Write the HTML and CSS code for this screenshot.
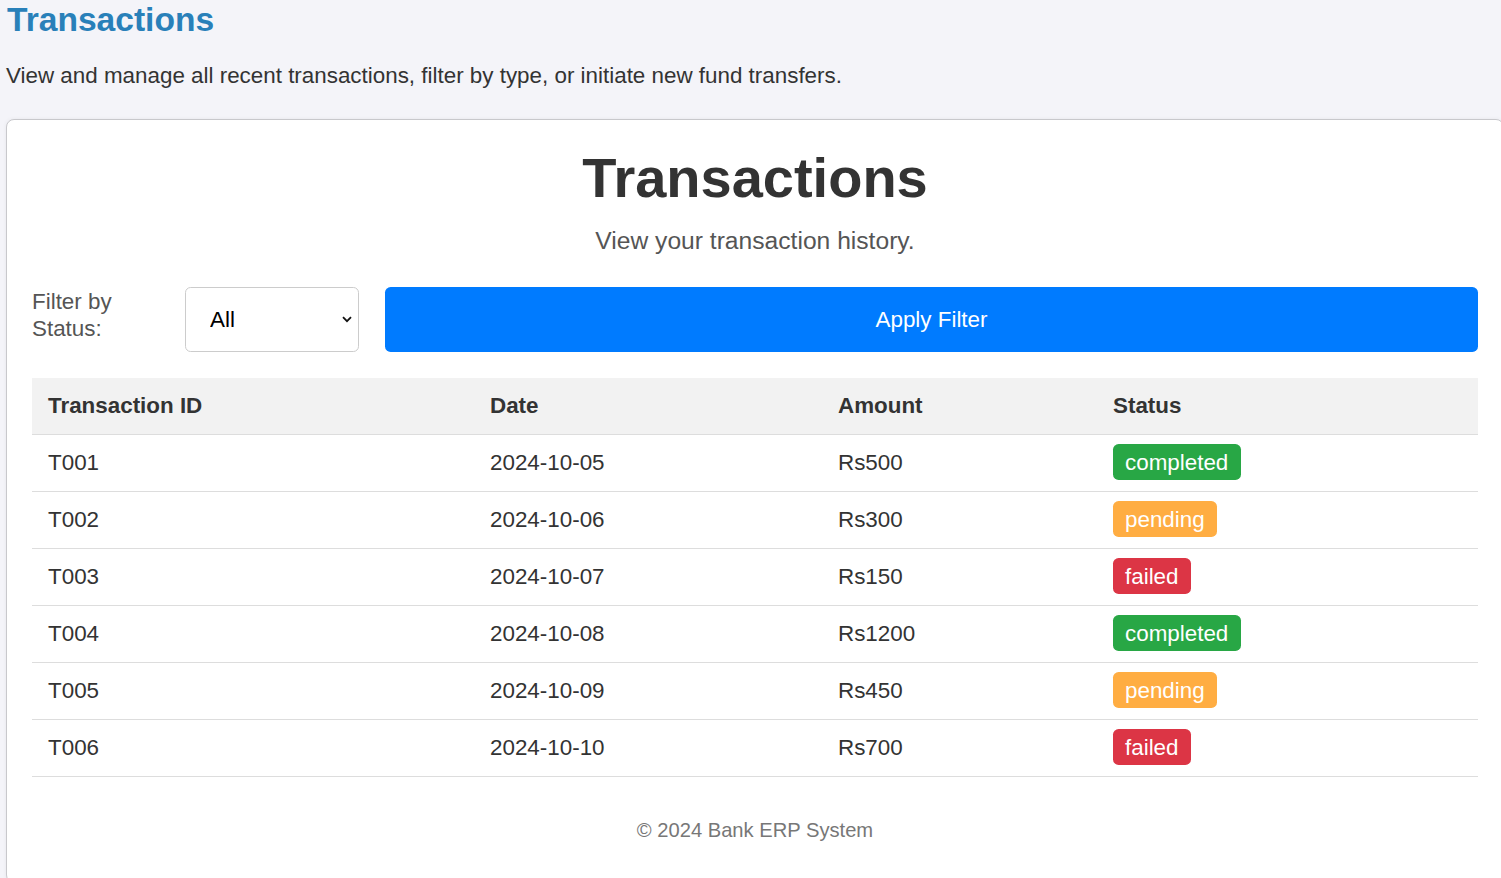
FILE: index.html
```html
<!DOCTYPE html>
<html lang="en">
<head>
<meta charset="utf-8">
<title>Transactions</title>
<link rel="stylesheet" href="styles.css">
</head>
<body>
<main class="page">
  <h2 class="page-title">Transactions</h2>
  <p class="page-desc">View and manage all recent transactions, filter by type, or initiate new fund transfers.</p>

  <section class="card">
    <h1 class="card-title">Transactions</h1>
    <p class="card-sub">View your transaction history.</p>

    <form class="filter">
      <label class="filter-label" for="status">Filter by Status:</label>
      <div class="select-wrap">
        <select id="status" class="select">
          <option>All</option>
          <option>completed</option>
          <option>pending</option>
          <option>failed</option>
        </select>
        <svg class="chevron" width="10" height="7" viewBox="0 0 10 7" aria-hidden="true"><path d="M1 1.2 L5 5.2 L9 1.2" fill="none" stroke="#111" stroke-width="1.8"/></svg>
      </div>
      <button type="button" class="btn">Apply Filter</button>
    </form>

    <table class="tx-table">
      <thead>
        <tr><th class="c-id">Transaction ID</th><th class="c-date">Date</th><th class="c-amt">Amount</th><th class="c-status">Status</th></tr>
      </thead>
      <tbody>
        <tr><td>T001</td><td>2024-10-05</td><td>Rs500</td><td><span class="badge badge-completed">completed</span></td></tr>
        <tr><td>T002</td><td>2024-10-06</td><td>Rs300</td><td><span class="badge badge-pending">pending</span></td></tr>
        <tr><td>T003</td><td>2024-10-07</td><td>Rs150</td><td><span class="badge badge-failed">failed</span></td></tr>
        <tr><td>T004</td><td>2024-10-08</td><td>Rs1200</td><td><span class="badge badge-completed">completed</span></td></tr>
        <tr><td>T005</td><td>2024-10-09</td><td>Rs450</td><td><span class="badge badge-pending">pending</span></td></tr>
        <tr><td>T006</td><td>2024-10-10</td><td>Rs700</td><td><span class="badge badge-failed">failed</span></td></tr>
      </tbody>
    </table>

    <footer class="footer">&copy; 2024 Bank ERP System</footer>
  </section>
</main>
</body>
</html>
```

FILE: styles.css
```css
html, body {
  margin: 0;
  padding: 0;
  overflow: hidden;
}

body {
  background: #f4f4f9;
  font-family: "Liberation Sans", Arial, sans-serif;
  font-size: 22.4px;
  color: #333;
}

.page {
  padding: 1px 0 0 6px;
}

.page-title {
  margin: 0 0 0 1px;
  font-size: 33.6px;
  font-weight: bold;
  color: #2980b9;
}

.page-desc {
  margin: 23.6px 0 0 0;
  font-size: 22.4px;
  color: #333;
}

.card {
  margin: 30px -3px 0 0;
  background: #fff;
  border: 1px solid #c8c8cc;
  border-radius: 8px;
  padding: 25px 25px 40px 25px;
  box-shadow: 0 0 4px rgba(0, 0, 0, 0.06);
}

.card-title {
  margin: 0;
  text-align: center;
  font-size: 56px;
  font-weight: bold;
  color: #333;
}

.card-sub {
  margin: 17.5px 0 32px 0;
  text-align: center;
  font-size: 24.64px;
  color: #555;
}

.filter {
  display: grid;
  grid-template-columns: 127px 174px 1fr;
  column-gap: 26px;
  align-items: center;
  height: 65px;
}

.filter-label {
  align-self: start;
  margin-top: 1px;
  color: #555;
  font-size: 22.4px;
  line-height: 27px;
}

.select-wrap {
  position: relative;
  height: 65px;
}

.select {
  appearance: none;
  -webkit-appearance: none;
  width: 100%;
  height: 65px;
  box-sizing: border-box;
  border: 1px solid #ccc;
  border-radius: 5.6px;
  background: #fff;
  padding: 0 30px 0 24px;
  font-family: "Liberation Sans", Arial, sans-serif;
  font-size: 22.4px;
  color: #000;
}

.chevron {
  position: absolute;
  right: 7px;
  top: 29px;
  pointer-events: none;
}

.btn {
  height: 65px;
  border: none;
  border-radius: 5.6px;
  background: #007bff;
  color: #fff;
  font-family: "Liberation Sans", Arial, sans-serif;
  font-size: 22.4px;
  cursor: pointer;
}

.tx-table {
  width: 100%;
  margin-top: 25.5px;
  border-collapse: collapse;
  table-layout: fixed;
}

.tx-table th,
.tx-table td {
  text-align: left;
  padding: 15px 16px;
  border-bottom: 1px solid #ddd;
  font-size: 22.4px;
  color: #333;
}

.tx-table th {
  background: #f2f2f2;
  font-weight: bold;
}

.c-id { width: 410px; }
.c-date { width: 316px; }
.c-amt { width: 243px; }
.c-status { width: auto; }

.badge {
  padding: 5.6px 12.5px 5.6px 12px;
  border-radius: 5.6px;
  color: #fff;
}

.badge-completed { background: #28a745; }
.badge-pending { background: #ffad42; }
.badge-failed { background: #dc3545; }

.footer {
  margin-top: 42px;
  text-align: center;
  font-size: 20.16px;
  color: #777;
}
```
